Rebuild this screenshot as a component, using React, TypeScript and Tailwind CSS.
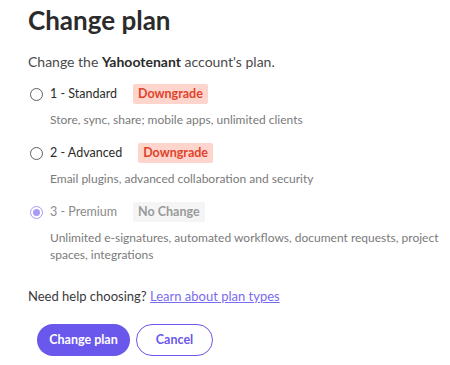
import React from 'react';

type Plan = {
  id: number;
  name: string;
  badge: string;
  badgeKind: 'down' | 'same';
  description: string;
  selected?: boolean;
  disabled?: boolean;
};

const PLANS: Plan[] = [
  { id: 1, name: '1 - Standard', badge: 'Downgrade', badgeKind: 'down', description: 'Store, sync, share; mobile apps, unlimited clients' },
  { id: 2, name: '2 - Advanced', badge: 'Downgrade', badgeKind: 'down', description: 'Email plugins, advanced collaboration and security' },
  {
    id: 3,
    name: '3 - Premium',
    badge: 'No Change',
    badgeKind: 'same',
    description: 'Unlimited e-signatures, automated workflows, document requests, project spaces, integrations',
    selected: true,
    disabled: true,
  },
];

const Radio: React.FC<{ checked?: boolean }> = ({ checked }) =>
  checked ? (
    <span className="w-[13px] h-[13px] rounded-full border-[1.5px] border-[#a99bf5] flex items-center justify-center flex-shrink-0">
      <span className="w-[7px] h-[7px] rounded-full bg-[#a99bf5]"></span>
    </span>
  ) : (
    <span className="w-[13px] h-[13px] rounded-full border-[1.5px] border-[#5f5f5f] flex-shrink-0"></span>
  );

const PlanOption: React.FC<{ plan: Plan }> = ({ plan }) => (
  <div className="flex flex-col">
    <div className="flex items-center h-[20px]">
      <div className="w-[22px] pl-[2px] flex items-center">
        <Radio checked={plan.selected} />
      </div>
      <span className={`text-[12.5px] ${plan.disabled ? 'text-[#8a8a8a]' : 'text-[#2b2b2b]'}`}>{plan.name}</span>
      <span
        className={`ml-4 px-[5px] h-[20px] flex items-center rounded-[2px] text-[12.5px] font-bold ${
          plan.badgeKind === 'down' ? 'bg-[#fdd5cc] text-[#e0432b]' : 'bg-[#f5f5f5] text-[#9a9a9a]'
        }`}
      >
        {plan.badge}
      </span>
    </div>
    <p className="pl-[22px] mt-[7px] text-[12px] leading-[17px] text-[#7a7a7a]">{plan.description}</p>
  </div>
);

export default function App() {
  return (
    <div className="w-[450px] h-[365px] bg-white pl-[28px] pr-0 pt-[4px] font-['Lato',sans-serif] overflow-hidden">
      <h1 className="text-[26px] font-bold text-[#2b2b2b] leading-[32px]">Change plan</h1>
      <p className="mt-[17px] text-[14px] leading-[18px] text-[#4a4a4a]">
        Change the <span className="font-bold text-[#2b2b2b]">Yahootenant</span> account's plan.
      </p>
      <div className="mt-[13px] flex flex-col gap-[15px]">
        {PLANS.map((p) => (
          <PlanOption key={p.id} plan={p} />
        ))}
      </div>
      <p className="mt-[24px] text-[13px] leading-[18px] text-[#3a3a3a]">
        Need help choosing?{' '}
        <a className="text-[#7a6cf0] underline" href="#">
          Learn about plan types
        </a>
      </p>
      <div className="mt-[19px] pl-[9px] flex gap-[6px]">
        <button className="h-[32px] w-[93px] rounded-full bg-[#6a57eb] text-white text-[12.5px] font-bold">Change plan</button>
        <button className="h-[32px] w-[77px] rounded-full border-[1.5px] border-[#6a57eb] text-[#6a57eb] text-[12.5px] font-bold">Cancel</button>
      </div>
    </div>
  );
}
